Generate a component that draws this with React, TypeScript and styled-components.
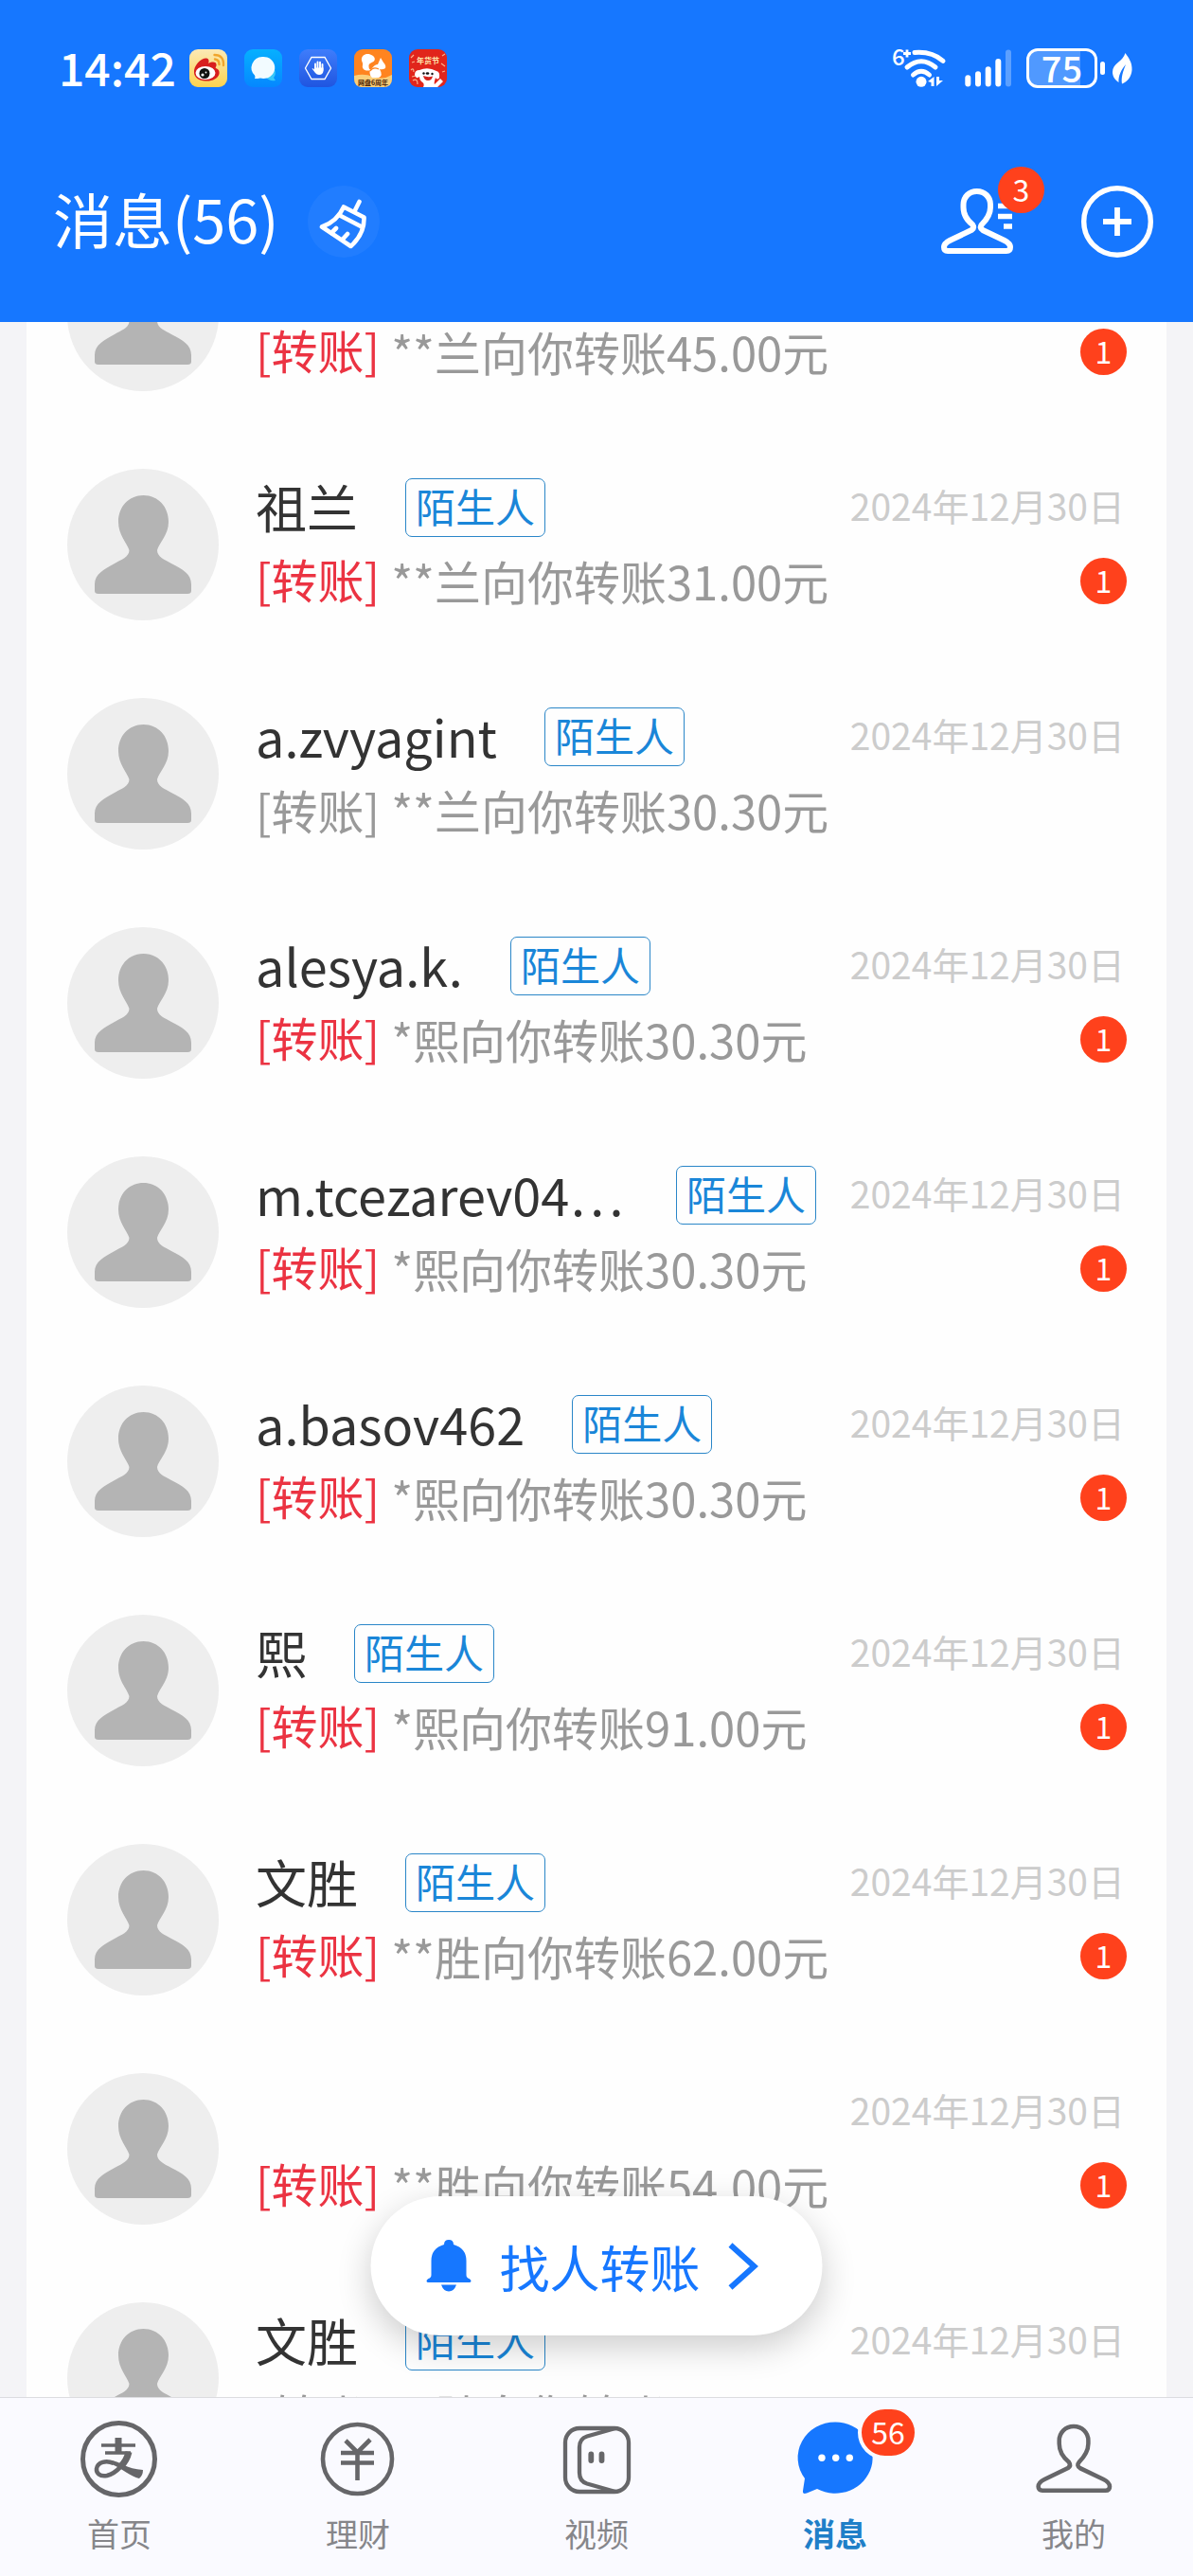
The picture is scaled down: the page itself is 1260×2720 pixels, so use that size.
import React, { useLayoutEffect, useRef } from "react";
import styled, { createGlobalStyle } from "styled-components";

const BLUE = "#1677ff";
const RED = "#ff411c";
const FONT = '"Noto Sans CJK SC", "Noto Sans", sans-serif';

const GlobalStyle = createGlobalStyle`
  * { box-sizing: border-box; }
  body { margin: 0; background: #f5f5f7; font-family: ${FONT}; }
  button { font-family: inherit; }
  svg { overflow: visible; }
`;

const Screen = styled.div`
  display: flex;
  flex-direction: column;
  height: 100vh;
  overflow: hidden;
  background: #f4f4f7;
`;

/* ---------- header ---------- */

const Header = styled.header`
  flex: none;
  padding-bottom: 16px;
  background: ${BLUE};
  color: #fff;
`;

const StatusBar = styled.div`
  display: flex;
  align-items: center;
  justify-content: space-between;
  height: 144px;
  padding: 0 64px 0 62px;
`;

const StatusGroup = styled.div<{ $gap: number }>`
  display: flex;
  align-items: center;
  gap: ${(p) => p.$gap}px;
`;

const Clock = styled.time`
  padding-bottom: 4px;
  font-size: 48px;
  line-height: 56px;
  font-weight: 500;
  margin-right: -4px;
`;

const Battery = styled.div`
  display: flex;
  align-items: center;
  gap: 3px;
`;

const BatteryBody = styled.div`
  display: flex;
  align-items: center;
  justify-content: center;
  width: 75px;
  height: 42px;
  padding-bottom: 2px;
  border: 3px solid #fff;
  border-radius: 12px;
  background: linear-gradient(90deg, rgba(255, 255, 255, 0.25) 78%, transparent 78%);
  font-size: 38px;
  line-height: 36px;
  font-weight: 500;
`;

const BatteryTip = styled.div`
  width: 5px;
  height: 14px;
  margin-right: 5px;
  border-radius: 3px;
  background: #fff;
`;

const TitleBar = styled.div`
  display: flex;
  align-items: center;
  height: 180px;
  padding: 0 42px 0 56px;
`;

const Title = styled.h1`
  margin: 0 30px 0 0;
  padding-bottom: 8px;
  font-size: 63px;
  line-height: 80px;
  font-weight: 400;
`;

const IconButton = styled.button<{ $tint?: boolean }>`
  position: relative;
  display: flex;
  padding: 0;
  border: 0;
  border-radius: 50%;
  background: ${(p) => (p.$tint ? "rgba(255, 255, 255, 0.05)" : "none")};
  color: inherit;
`;

const Actions = styled.div`
  display: flex;
  align-items: center;
  gap: 72px;
  margin-left: auto;
`;

const Badge = styled.span`
  display: flex;
  align-items: center;
  justify-content: center;
  min-width: 49px;
  height: 49px;
  padding-bottom: 3px;
  border-radius: 25px;
  background: ${RED};
  color: #fff;
  font-size: 32px;
  line-height: 40px;
`;

const ContactsBadge = styled(Badge)`
  position: absolute;
  left: 60px;
  top: -23px;
`;

/* ---------- conversation list ---------- */

const Main = styled.main`
  position: relative;
  flex: 1;
  min-height: 0;
`;

const Scroller = styled.div`
  height: 100%;
  overflow-y: auto;
  scrollbar-width: none;
  padding: 0 28px;
`;

const List = styled.ul`
  margin: 0;
  padding: 0;
  list-style: none;
  background: #fefefe;
`;

const Row = styled.a`
  display: flex;
  gap: 39px;
  height: 242px;
  padding: 41px 42px 41px 43px;
  color: inherit;
  text-decoration: none;
`;

const Avatar = styled.svg`
  flex: none;
  width: 160px;
  height: 160px;
`;

const Body = styled.div`
  display: flex;
  flex-direction: column;
  flex: 1;
  gap: 18px;
  min-width: 0;
  padding-top: 10px;
`;

const Line = styled.div<{ $h: number }>`
  display: flex;
  align-items: center;
  height: ${(p) => p.$h}px;
  white-space: nowrap;
`;

const Name = styled.span<{ $cut?: boolean }>`
  width: ${(p) => (p.$cut ? "394px" : "auto")};
  margin-right: 50px;
  padding-bottom: 2px;
  color: #333;
  font-family: ${(p) => (p.$cut ? '"Noto Sans CJK KR", sans-serif' : "inherit")};
  font-size: 54px;
  line-height: 62px;
`;

const Tag = styled.span`
  height: 62px;
  padding: 0 10px;
  border: 1px solid #2a86c8;
  border-radius: 7px;
  color: #1a86d8;
  font-size: 42px;
  line-height: 56px;
`;

const DateText = styled.time`
  margin-left: auto;
  padding: 0 2px 6px 0;
  color: #ccc;
  font-size: 39px;
  line-height: 56px;
`;

const Preview = styled.span`
  display: flex;
  align-items: center;
  gap: 12px;
  color: #999;
  font-size: 49px;
  line-height: 56px;
`;

const Kind = styled.span<{ $unread: boolean }>`
  padding-bottom: ${(p) => (p.$unread ? "4px" : "0")};
  color: ${(p) => (p.$unread ? "#eb3342" : "#999")};
`;

const RowBadge = styled(Badge)`
  margin-left: auto;
`;

const Pill = styled.button`
  position: absolute;
  left: 50%;
  bottom: 65px;
  transform: translateX(-50%);
  display: flex;
  align-items: center;
  gap: 30px;
  height: 147px;
  padding: 0 68px 0 59px;
  border: 0;
  border-radius: 74px;
  background: #fff;
  box-shadow: 0 12px 36px rgba(0, 0, 0, 0.2);
  color: ${BLUE};
  font-size: 53px;
  line-height: 64px;
  white-space: nowrap;
`;

/* ---------- tab bar ---------- */

const TabBar = styled.nav`
  flex: none;
  display: grid;
  grid-template-columns: repeat(5, 1fr);
  padding: 23px 0 22px;
  border-top: 1px solid #dcdce0;
  background: #fafaff;
`;

const Tab = styled.a<{ $active?: boolean }>`
  display: flex;
  flex-direction: column;
  align-items: center;
  gap: 13px;
  color: ${(p) => (p.$active ? "#1f7fc8" : "#86868a")};
  font-size: 34px;
  line-height: 46px;
  font-weight: ${(p) => (p.$active ? 700 : 400)};
  text-decoration: none;
`;

const TabIcon = styled.span`
  position: relative;
  display: flex;
  width: 84px;
  height: 84px;
  color: #666669;
`;

const TabBadge = styled(Badge)`
  position: absolute;
  left: 66px;
  top: -15px;
  min-width: 64px;
  height: 57px;
  border: 4px solid #fafaff;
  border-radius: 29px;
  font-weight: 400;
`;

/* ---------- drawings ---------- */

const PERSON =
  "M33 38C28 34 23.500 28 23.500 20V17C23.500 9 29.500 3 37.700 3S52 9 52 17V20C52 28 47 34 43 38Q40 41.500 44 44L67 55Q73 58 73 62Q73 66 69 66H7Q3 66 3 62Q3 58 9 55L32 44Q35.500 41.500 33 38Z";

const WeiboIcon = () => (
  <svg width="40" height="40" viewBox="0 0 40 40">
    <defs>
      <linearGradient id="wb" x1="0" y1="0" x2="0" y2="1">
        <stop offset="0" stopColor="#fbe9b6" />
        <stop offset="1" stopColor="#fdd34f" />
      </linearGradient>
    </defs>
    <rect width="40" height="40" rx="9" fill="url(#wb)" />
    <path d="M5 25C4 17 13 9 18 9.500C21 10 21 13 20 15C24 13 28 13 28.500 16C29 18 27 19 28 20C31 21 32 23 31.500 26C30 31 24 34 17 33.500C10 33 5.500 30 5 25Z" fill="#d81e1e" />
    <ellipse cx="17" cy="25" rx="10.500" ry="7" fill="#fff" />
    <circle cx="16" cy="25.500" r="5.500" fill="#111" />
    <circle cx="14" cy="27" r="1.600" fill="#fff" />
    <circle cx="17.500" cy="24.500" r="0.900" fill="#fff" />
    <path d="M27 10.500Q31.500 11 31.500 16M26.500 6Q36.500 6 36 17" fill="none" stroke="#f0a52c" strokeWidth="2.400" strokeLinecap="round" />
  </svg>
);

const ChatAppIcon = () => (
  <svg width="40" height="40" viewBox="0 0 40 40">
    <defs>
      <linearGradient id="ch" x1="0" y1="0" x2="0" y2="1">
        <stop offset="0" stopColor="#06b0ff" />
        <stop offset="1" stopColor="#0587ff" />
      </linearGradient>
    </defs>
    <rect width="40" height="40" rx="9" fill="url(#ch)" />
    <path d="M22 29Q29 29 32 21Q34 27 31 30L33 33Q26 34 22 29Z" fill="#37c8fa" />
    <path d="M19 8A12 11.500 0 1 1 17 30.500Q14 31 11 31Q12 29 11 27.500A12 11.500 0 0 1 19 8Z" fill="#f2fbff" />
  </svg>
);

const HandAppIcon = () => (
  <svg width="40" height="40" viewBox="0 0 40 40">
    <defs>
      <linearGradient id="hd" x1="0" y1="0" x2="0" y2="1">
        <stop offset="0" stopColor="#3f7dfb" />
        <stop offset="1" stopColor="#1f55e0" />
      </linearGradient>
    </defs>
    <rect width="40" height="40" rx="9" fill="url(#hd)" />
    <path d="M13 8.500H27L33.500 20L27 31.500H13L6.500 20Z" fill="none" stroke="#fff" strokeWidth="1.300" />
    <path d="M17 22V15.500M19.500 21V13.500M22 21V13.800M24.500 22V16" stroke="#fff" strokeWidth="1.900" strokeLinecap="round" />
    <path d="M16 19.500H25.500V23Q25 27 21 27Q18.500 27 17 25L13.500 20.500Q14.500 19.500 16 21.500Z" fill="#fff" />
  </svg>
);

const SquirrelAppIcon = () => (
  <svg width="40" height="40" viewBox="0 0 40 40">
    <rect width="40" height="40" rx="9" fill="#ff8420" />
    <path d="M0 28Q10 25 20 29T40 27V31Q40 40 31 40H9Q0 40 0 31Z" fill="#f9cf7c" />
    <path d="M8 12C7 6 13 4 17 5.500C22 7 23 11 20.500 13C18 14.500 15 15 15.500 18C15.500 20 16 21 17.500 22C11 24 8 20 9 17Q9.500 15 8 12Z" fill="#fff" />
    <path d="M25 16L28 9L31 14Q34 17 33 20Q30 22 27 21Q31 28 26 30H19Q14 25 19 20Q22 16 25 16Z" fill="#fff" />
    <path d="M17 23Q20 18 26 21" fill="none" stroke="#ff8420" strokeWidth="1.200" />
    <text x="20" y="38" textAnchor="middle" fontSize="7" fontWeight="700" fill="#4a1d05">网盘6周年</text>
  </svg>
);

const DogAppIcon = () => (
  <svg width="40" height="40" viewBox="0 0 40 40">
    <rect width="40" height="40" rx="9" fill="#e1251b" />
    <path d="M2 9L5 6M3 14L6 13M35 7L38 5M34 15L38 18M2 22Q5 19 5 24M35 24L38 23M4 33Q9 30 9 37M3 29L7 28" fill="none" stroke="#f7b08a" strokeWidth="1.200" />
    <text x="20" y="15" textAnchor="middle" fontSize="8" fontWeight="700" fill="#ffe9b0">年货节</text>
    <path d="M6 27Q6 22 11 22Q20 18 29 23Q33 24 32 30Q30 33 28 30Q26 36 27 37L33 31L36 34L30 40H15Q17 36 13 34Q11 32 11 29Q7 32 6 27Z" fill="#fff" />
    <circle cx="15.500" cy="25.500" r="1.200" fill="#111" />
    <circle cx="24.500" cy="26" r="1.200" fill="#111" />
    <ellipse cx="19.500" cy="25.500" rx="1.800" ry="1.200" fill="#111" />
    <path d="M15 28Q20 30 25 28.500Q24 33 20 33Q16 33 15 28Z" fill="#d3241c" />
  </svg>
);

const WifiIcon = () => (
  <svg width="64" height="44" viewBox="0 0 64 44" fill="none" stroke="#fff" strokeWidth="5">
    <text x="3" y="19" fontSize="24" fontWeight="500" fill="#fff" stroke="none">6</text>
    <path d="M15 6.500H23M19 2.500V10.500" strokeWidth="2.800" />
    <path d="M27 5.500Q45 4 57 14.300M19 21Q34 8.500 49 21M25.500 29Q34 21.500 42.500 29" strokeLinecap="round" />
    <circle cx="34" cy="36.300" r="5.500" fill="#fff" stroke="none" />
    <path d="M41 36L47.500 31V41H44.500V37ZM50 31V41L57 35H53V31Z" fill="#fff" stroke="none" />
  </svg>
);

const SignalIcon = () => (
  <svg width="49" height="44" viewBox="0 0 49 44" stroke="#fff" strokeWidth="6" strokeLinecap="round">
    <path d="M3.300 32.300V38.500M14 28.300V38.500M24.700 23.300V38.500M35.300 15V38.500" />
    <path d="M46 5.500V38.500" opacity="0.300" />
  </svg>
);

const LeafIcon = () => (
  <svg width="21" height="33" viewBox="0 0 21 33">
    <path d="M13.500 0C17 5 21 10 20.500 18C20 25 16 30 10 32.500C9.500 29 9 24 14 12C9 18 6 24 6.500 31C2 28 0 24 0 20C0 11 11 9 13.500 0Z" fill="#fff" />
  </svg>
);

const BroomIcon = () => (
  <svg width="76" height="76" viewBox="0 0 76 76" fill="none" stroke="#fff" strokeWidth="4.600" strokeLinecap="round" strokeLinejoin="round">
    <path d="M54.500 17L49 28M38 22.500L59.500 33.500Q60 51 45.500 64L15 43.500Q31 38 38 22.500Z" />
    <path d="M33 31L57 43.500M30 45L25 50M42 51L36.500 57" />
  </svg>
);

const ContactsIcon = () => (
  <svg width="76" height="70" viewBox="0 0 76 70" fill="none" stroke="#fff">
    <path d={PERSON} strokeWidth="6" />
    <path d="M60 18.500H75M60 29.500H75M66 40H75" strokeWidth="5.500" />
  </svg>
);

const PlusIcon = () => (
  <svg width="76" height="76" viewBox="0 0 76 76" fill="none" stroke="#fff">
    <circle cx="38" cy="38" r="35.300" strokeWidth="5.400" />
    <path d="M23 38H53M38 23V53" strokeWidth="5.800" />
  </svg>
);

const BellIcon = () => (
  <svg width="47" height="55" viewBox="0 0 47 55" fill="currentColor">
    <path d="M18.500 5Q18.500 0 23.500 0T28.500 5Q42 9 42 22V37Q42 40 45 41Q47 42 47 43.500T45 45H2Q0 45 0 43.500T2 41Q5 40 5 37V22Q5 9 18.500 5ZM15.500 47.500H31.500Q29 54.500 23.500 54.500T15.500 47.500Z" />
  </svg>
);

const ChevronIcon = () => (
  <svg width="31" height="48" viewBox="0 0 31 48" fill="none" stroke="currentColor" strokeWidth="6">
    <path d="M2 1.500L27 24L2 46.500" />
  </svg>
);

const HomeIcon = () => (
  <svg width="84" height="84" viewBox="0 0 84 84" fill="none" stroke="currentColor">
    <circle cx="41.500" cy="41.500" r="38" strokeWidth="5" />
    <path d="M23 27H59M27 35H54" strokeWidth="3.600" />
    <path d="M41 19V35" strokeWidth="7" />
    <path d="M51.500 35C49 45 40 56 29 59C21 60.500 17.500 56 18 51.500C19 45 28 42 36 46" strokeWidth="4.500" />
    <path d="M34 43C42 44 50 52 67 53Q67 59 63 62C54 60 46 52 34 47Z" fill="currentColor" stroke="none" />
    <path d="M52 34Q50 43 43 50" strokeWidth="7" />
  </svg>
);

const WealthIcon = () => (
  <svg width="84" height="84" viewBox="0 0 84 84" fill="none" stroke="currentColor" strokeWidth="4.600">
    <circle cx="41.500" cy="41.500" r="36.500" />
    <path d="M29 22L41.500 34.500L55 21M24 35H59M24 45.500H59M41.500 34V64" />
  </svg>
);

const VideoIcon = () => (
  <svg width="84" height="84" viewBox="0 0 84 84" fill="none" stroke="currentColor" strokeWidth="4.300">
    <rect x="9" y="9" width="67" height="67" rx="15" />
    <path d="M62 9L32 17.500Q24 20 24 29V56Q24 65 32 67.500L62 76" />
    <path d="M36.300 36.500V43M47.500 36.500V43" strokeWidth="5.800" strokeLinecap="round" />
  </svg>
);

const MessageIcon = () => (
  <svg width="84" height="84" viewBox="0 0 84 84">
    <path d="M42.500 2.500A39.500 37.600 0 1 1 23 73L12 77.500Q7.500 79 8 75L10 62A39.500 37.600 0 0 1 42.500 2.500Z" fill={BLUE} />
    <g fill="#fff">
      <circle cx="28" cy="40.300" r="3.700" />
      <circle cx="42.700" cy="40.300" r="3.700" />
      <circle cx="57.300" cy="40.300" r="3.700" />
    </g>
  </svg>
);

const MeIcon = () => (
  <svg width="84" height="84" viewBox="-1.300 -3.500 78 78" fill="none" stroke="currentColor" strokeWidth="4.200">
    <path d={PERSON} />
  </svg>
);

const AvatarImage = () => (
  <Avatar viewBox="0 0 160 160" aria-hidden="true">
    <circle cx="80" cy="80" r="80" fill="#eee" />
    <path
      d="M80.500 28C96 28 107 40 107 56C107 70 97 78 95 86C95 93 103 96 110 100C122 106 131 111 131 122V129Q131 132 127 132H33Q29 132 29 129V122C29 111 39 106 50 100C57 96 65.500 93 65.500 86C63 78 54 70 54 56C54 40 65 28 80.500 28Z"
      fill="#b4b4b4"
    />
  </Avatar>
);

/* ---------- data ---------- */

type Chat = { name: string; text: string; unread: boolean; cut?: boolean };

const chats: Chat[] = [
  { name: "祖兰", text: "**兰向你转账45.00元", unread: true },
  { name: "祖兰", text: "**兰向你转账31.00元", unread: true },
  { name: "a.zvyagint", text: "**兰向你转账30.30元", unread: false },
  { name: "alesya.k.", text: "*熙向你转账30.30元", unread: true },
  { name: "m.tcezarev04…", text: "*熙向你转账30.30元", unread: true, cut: true },
  { name: "a.basov462", text: "*熙向你转账30.30元", unread: true },
  { name: "熙", text: "*熙向你转账91.00元", unread: true },
  { name: "文胜", text: "**胜向你转账62.00元", unread: true },
  { name: "", text: "**胜向你转账54.00元", unread: true },
  { name: "文胜", text: "**胜向你转账", unread: false },
];

const tabs = [
  { label: "首页", icon: <HomeIcon /> },
  { label: "理财", icon: <WealthIcon /> },
  { label: "视频", icon: <VideoIcon /> },
  { label: "消息", icon: <MessageIcon />, count: 56 },
  { label: "我的", icon: <MeIcon /> },
];

function ChatRow({ chat }: { chat: Chat }) {
  return (
    <li>
      <Row href="#chat">
        <AvatarImage />
        <Body>
          <Line $h={62}>
            {chat.name && <Name $cut={chat.cut}>{chat.name}</Name>}
            {chat.name && <Tag>陌生人</Tag>}
            <DateText dateTime="2024-12-30">2024年12月30日</DateText>
          </Line>
          <Line $h={56}>
            <Preview>
              <Kind $unread={chat.unread}>[转账]</Kind>
              <span>{chat.text}</span>
            </Preview>
            {chat.unread && <RowBadge>1</RowBadge>}
          </Line>
        </Body>
      </Row>
    </li>
  );
}

export default function App() {
  const scroller = useRef<HTMLDivElement>(null);

  // The list opens part-way through the first conversation.
  useLayoutEffect(() => {
    if (scroller.current) scroller.current.scrollTop = 128;
  }, []);

  return (
    <Screen>
      <GlobalStyle />
      <Header>
        <StatusBar>
          <StatusGroup $gap={18}>
            <Clock>14:42</Clock>
            <WeiboIcon />
            <ChatAppIcon />
            <HandAppIcon />
            <SquirrelAppIcon />
            <DogAppIcon />
          </StatusGroup>
          <StatusGroup $gap={16}>
            <WifiIcon />
            <SignalIcon />
            <Battery>
              <BatteryBody>75</BatteryBody>
              <BatteryTip />
              <LeafIcon />
            </Battery>
          </StatusGroup>
        </StatusBar>
        <TitleBar>
          <Title>消息(56)</Title>
          <IconButton $tint type="button" aria-label="清除未读">
            <BroomIcon />
          </IconButton>
          <Actions>
            <IconButton type="button" aria-label="通讯录">
              <ContactsIcon />
              <ContactsBadge>3</ContactsBadge>
            </IconButton>
            <IconButton type="button" aria-label="添加">
              <PlusIcon />
            </IconButton>
          </Actions>
        </TitleBar>
      </Header>

      <Main>
        <Scroller ref={scroller}>
          <List>
            {chats.map((chat, i) => (
              <ChatRow key={i} chat={chat} />
            ))}
          </List>
        </Scroller>
        <Pill type="button">
          <BellIcon />
          找人转账
          <ChevronIcon />
        </Pill>
      </Main>

      <TabBar>
        {tabs.map((tab) => (
          <Tab key={tab.label} href="#tab" $active={Boolean(tab.count)}>
            <TabIcon>
              {tab.icon}
              {tab.count && <TabBadge>{tab.count}</TabBadge>}
            </TabIcon>
            {tab.label}
          </Tab>
        ))}
      </TabBar>
    </Screen>
  );
}
